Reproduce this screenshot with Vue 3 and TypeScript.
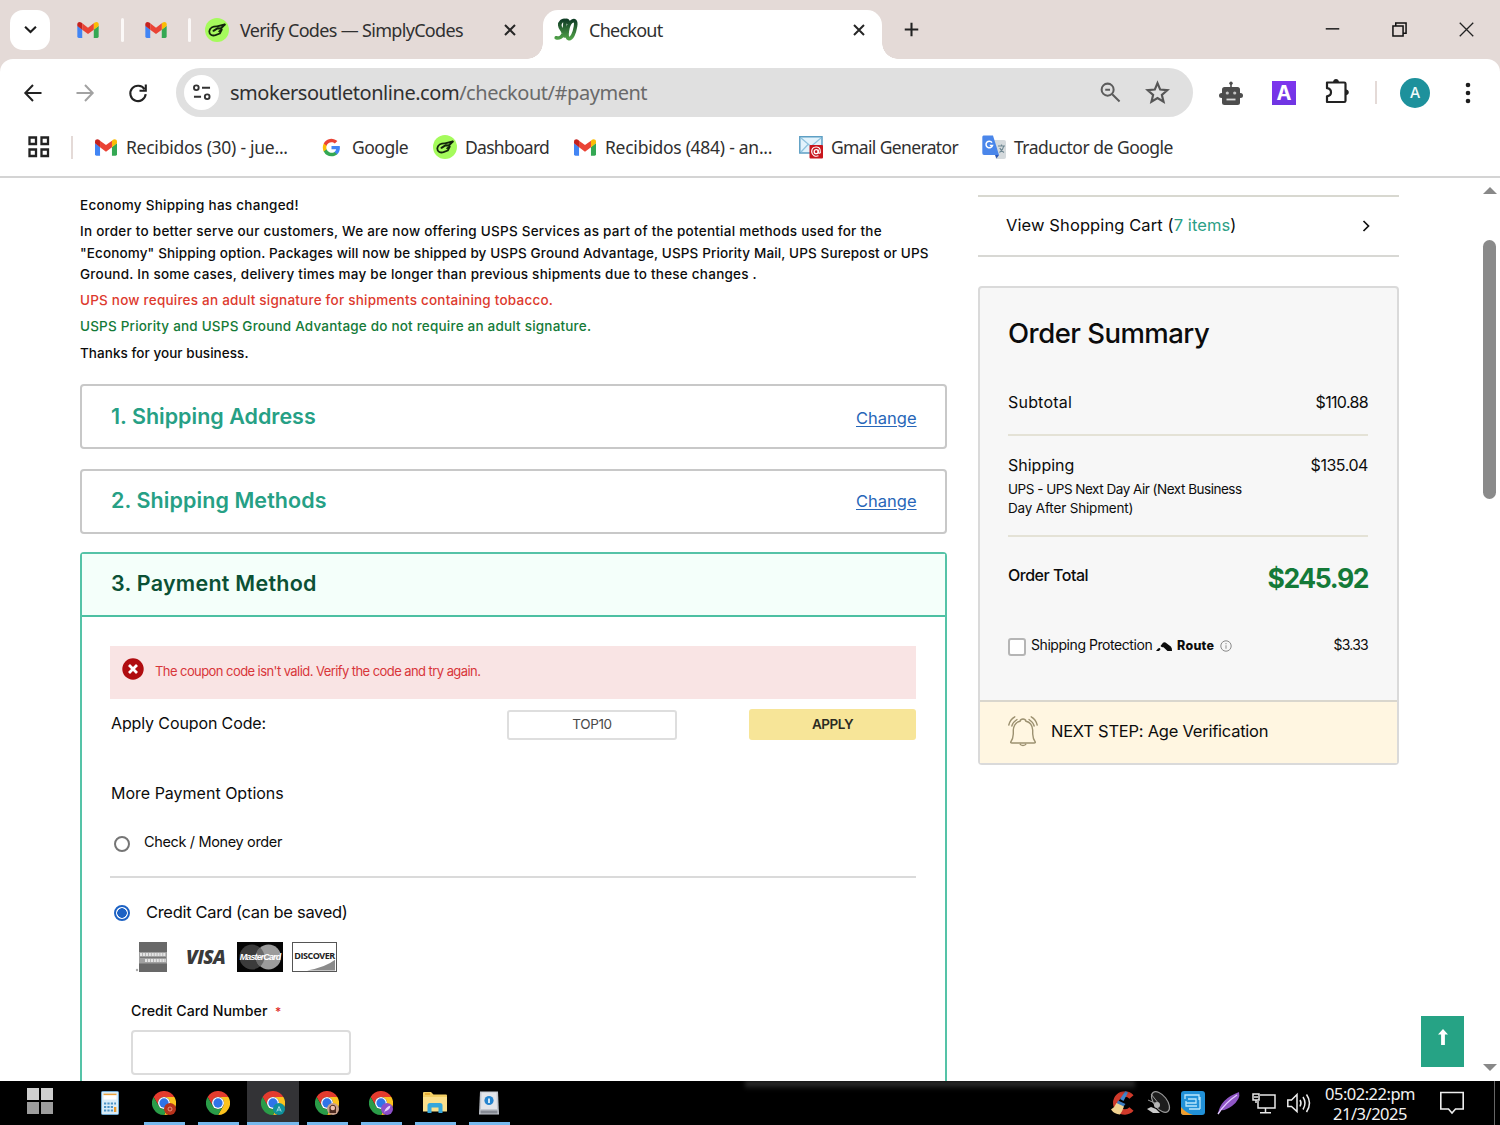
<script setup lang="ts">
interface Bookmark { icon: string; label: string; cls: string }
interface TaskApp { id: string; icon: string; badge?: string; mark?: string; active?: boolean; running: boolean }

const bookmarks: Bookmark[] = [
  { icon: 'gmail', label: 'Recibidos (30) - jue...', cls: 'bm-jue' },
  { icon: 'google', label: 'Google', cls: 'bm-google' },
  { icon: 'simply', label: 'Dashboard', cls: 'bm-dash' },
  { icon: 'gmail', label: 'Recibidos (484) - an...', cls: 'bm-an' },
  { icon: 'mailgen', label: 'Gmail Generator', cls: 'bm-gen' },
  { icon: 'translate', label: 'Traductor de Google', cls: 'bm-trad' },
]

const apps: TaskApp[] = [
  { id: 'calc', icon: 'calc', running: false },
  { id: 'c1', icon: 'chrome', badge: '#b8331c', mark: 'O', running: true },
  { id: 'c2', icon: 'chrome', running: true },
  { id: 'c3', icon: 'chrome', badge: '#0f919c', mark: 'A', active: true, running: true },
  { id: 'c4', icon: 'chrome', badge: '#c9a08c', mark: 'face', running: true },
  { id: 'c5', icon: 'chrome', badge: '#8c4fc9', mark: 'feather', running: true },
  { id: 'files', icon: 'folder', running: true },
  { id: 'dev', icon: 'device', running: true },
]
</script>

<template>
  <div class="screen">
    <svg class="defs" width="0" height="0" aria-hidden="true">
      <symbol id="gmail" viewBox="0 0 24 18">
        <path fill="#4285f4" d="M0 4.2V16.4Q0 18 1.6 18H5.5V8.5z" />
        <path fill="#34a853" d="M24 4.2V16.4Q24 18 22.4 18H18.5V8.5z" />
        <path fill="#c5221f" d="M0 4.4V2.6C0 .2 2.6-.7 4.4.6L5.5 1.5V8.6z" />
        <path fill="#fbbc04" d="M24 4.4V2.6C24 .2 21.4-.7 19.6.6L18.5 1.5V8.6z" />
        <path fill="#ea4335" d="M5.5 8.6V1.5L12 6.4 18.5 1.5V8.6L12 13.5z" />
      </symbol>
      <symbol id="google" viewBox="0 0 24 24">
        <path fill="#4285f4" d="M22.6 12.2c0-.8-.1-1.5-.2-2.2H12v4.3h5.9a5 5 0 0 1-2.2 3.3v2.8h3.6c2.1-2 3.3-4.8 3.3-8.2z" />
        <path fill="#34a853" d="M12 23c3 0 5.5-1 7.3-2.6l-3.6-2.8a6.6 6.6 0 0 1-9.9-3.5H2.2v2.8A11 11 0 0 0 12 23z" />
        <path fill="#fbbc05" d="M5.8 14.1a6.6 6.6 0 0 1 0-4.2V7.1H2.2a11 11 0 0 0 0 9.8z" />
        <path fill="#ea4335" d="M12 5.4c1.6 0 3.1.6 4.2 1.6l3.2-3.1A11 11 0 0 0 2.2 7.1l3.600 2.800A6.6 6.6 0 0 1 12 5.400z" />
      </symbol>
      <symbol id="simply" viewBox="0 0 24 24">
        <circle cx="12" cy="12" r="12" fill="#a5fb5c" />
        <g fill="none" stroke="#12250b" stroke-linecap="round" stroke-linejoin="round">
          <path d="M19.800 6.500L12 8.300C8 8.200 4.600 10 4.300 13.400C4.300 17 7.500 18 10.500 17.200L14.800 15.500L16.800 11.500" stroke-width="1.800" />
          <path d="M8.500 12.800L12.800 10.200L15.800 10.500L19.500 6.800" stroke-width="2" />
          <path d="M14 13.300L16 12" stroke-width="1.600" />
        </g>
      </symbol>
      <symbol id="mailgen" viewBox="0 0 24 24">
        <path d="M.8 1.800H23V18H.8z" fill="#e2f3fc" stroke="#5d9fc4" stroke-width="1.5" />
        <path d="M2 3L12 11.500 22 3M2 17L9 9.500" fill="none" stroke="#8fc3de" stroke-width="1.3" />
        <rect x="10.500" y="10" width="13.500" height="13.500" rx="1" fill="#c8161d" />
        <circle cx="17.200" cy="16.700" r="2" fill="none" stroke="#fff" stroke-width="1.3" />
        <path d="M19.200 14.500V17.500Q20 19 21.300 17.500C22 12.500 18.500 11.900 17 12C13.500 12.200 12.600 15 12.700 17C13 20.500 16.500 22 19.500 20.800" fill="none" stroke="#fff" stroke-width="1.2" />
      </symbol>
      <symbol id="translate" viewBox="0 0 24 24">
        <path d="M9 5H22Q24 5 24 7V22Q24 24 22 24H14z" fill="#d5dadd" />
        <path d="M1.500 .5H11L17 20H2Q.3 20 .3 18V2Q.3 .5 1.500 .5z" fill="#4a86ea" />
        <path d="M13 20H17L14.500 23.500z" fill="#2f58b4" />
        <path d="M10 7.600A3.300 3.300 0 1 0 10.500 10.500H7.800" fill="none" stroke="#fff" stroke-width="1.5" />
        <path d="M16 11H23M19.500 9.500V11M21.800 11Q21 15 17.500 17.500M17.800 13Q19 16 22 17.500" fill="none" stroke="#6f8792" stroke-width="1.2" />
      </symbol>
      <symbol id="chrome" viewBox="0 0 48 48">
        <path fill="#e33b2e" d="M3.200 12A24 24 0 0 1 44.800 12H24A12 12 0 0 0 13.600 30z" />
        <path fill="#fcc31e" d="M24 12H44.800A24 24 0 0 1 24 48L34.400 30A12 12 0 0 0 24 12z" />
        <path fill="#2a9c48" d="M24 48A24 24 0 0 1 3.200 12L13.600 30A12 12 0 0 0 34.400 30z" />
        <circle cx="24" cy="24" r="12" fill="#fff" />
        <circle cx="24" cy="24" r="9.300" fill="#2f74e8" />
      </symbol>
      <symbol id="calc" viewBox="0 0 24 24">
        <rect x="3.500" y=".5" width="17" height="23" rx="1" fill="#d9ecf8" stroke="#6fa9d2" stroke-width="1" />
        <rect x="5.500" y="3" width="13" height="5.500" fill="#fff" />
        <path d="M5.500 3.400H18.500" stroke="#e9a03b" stroke-width="1.5" />
        <path d="M6 12.500H18M6 16H15.500M6 19.500H15.500" stroke="#4c93c6" stroke-width="2" stroke-dasharray="2.2 1.2" />
        <rect x="16" y="16" width="2.300" height="5" fill="#e99a2c" />
      </symbol>
      <symbol id="folder" viewBox="0 0 24 24">
        <path d="M0 2Q0 1 1 1H8L10.500 3.500H23Q24 3.500 24 4.500V20H0z" fill="#f3cf63" />
        <path d="M0 6H24V20.500H0z" fill="#fbe08c" />
        <path d="M2 3H7" stroke="#e5a52b" stroke-width="1.5" />
        <path d="M4.500 22V14.500Q4.500 12 7 12H17Q19.500 12 19.500 14.500V22H15.500V16.500H8.500V22z" fill="#35a7dc" />
      </symbol>
      <symbol id="device" viewBox="0 0 24 24">
        <path d="M3 .5H21L22 23.500H2z" fill="#c3c7cf" />
        <path d="M4.500 1.500H19.500L20 18H4z" fill="#e3e5ea" />
        <path d="M3.500 19.500H20.500V22.500H3.500z" fill="#868a93" />
        <circle cx="12" cy="9.500" r="4.600" fill="#2584cf" />
        <path d="M12 7.500V12" stroke="#e6f5ff" stroke-width="1.8" />
      </symbol>
    </svg>

    <header class="tabs">
      <button class="tab-search"><svg viewBox="0 0 12 8" width="13" height="9"><path d="M1 1.500L6 6.300 11 1.500" fill="none" stroke="#1c1c1c" stroke-width="2" /></svg></button>
      <svg class="pin pin-a"><use href="#gmail" /></svg>
      <i class="tab-sep sep-a"></i>
      <svg class="pin pin-b"><use href="#gmail" /></svg>
      <i class="tab-sep sep-b"></i>
      <svg class="fav"><use href="#simply" /></svg>
      <span class="ui tab-title">Verify Codes — SimplyCodes</span>
      <svg class="x" viewBox="0 0 12 12"><path d="M1 1L11 11M11 1L1 11" /></svg>
      <div class="tab-active">
        <svg class="so" viewBox="0 0 24 24">
          <defs><linearGradient id="sog" x1="0" y1="0" x2="0" y2="1"><stop offset="0" stop-color="#123f27" /><stop offset="1" stop-color="#4fa047" /></linearGradient></defs>
          <path d="M11.500 2.500C8.500 1.500 5.500 4 5.800 7.500C6 11 9.500 12 9.200 15.500C8.800 19 5 20.500 2.200 19.800M11.500 2.500C10 8 10.500 13 11 18M14.500 20.500C11.500 19.500 13.500 7 17 4C20.500 1 22.500 3 21.500 8.500C20.500 14.500 18 21.500 14.500 20.500M14.500 5Q14 1.500 11.500 2.500" fill="none" stroke="url(#sog)" stroke-width="3.6" stroke-linecap="round" />
        </svg>
        <span class="ui active-title">Checkout</span>
        <svg class="x" viewBox="0 0 12 12"><path d="M1 1L11 11M11 1L1 11" /></svg>
      </div>
      <svg class="plus" viewBox="0 0 16 16"><path d="M8 .8V15.200M.8 8H15.200" stroke="#222" stroke-width="2.2" /></svg>
      <div class="win">
        <svg viewBox="0 0 16 16"><path d="M.8 7.300H15.200" stroke="#111" stroke-width="1.5" /></svg>
        <svg viewBox="0 0 16 16"><path d="M1 4.200H11.800V15H1zM4 4V1H15V12H12" fill="none" stroke="#111" stroke-width="1.6" /></svg>
        <svg viewBox="0 0 16 16"><path d="M.8.8L15.200 15.200M15.200.8L.8 15.200" stroke="#222" stroke-width="1.4" /></svg>
      </div>
    </header>

    <div class="toolbar-wrap">
      <div class="toolbar">
        <svg class="nav" viewBox="0 0 18 18"><path d="M17.500 9H1.800M9 1L1.300 9 9 17" fill="none" stroke="#222" stroke-width="2" /></svg>
        <svg class="nav fwd" viewBox="0 0 18 18"><path d="M.5 9H16.200M9 1L16.700 9 9 17" fill="none" stroke="#a2a2a2" stroke-width="2" /></svg>
        <svg class="nav" viewBox="0 0 18 18"><path d="M15.500 5.200A7.700 7.700 0 1 0 16.700 10.200M16.800.5V6.700H10.500" fill="none" stroke="#222" stroke-width="2.1" /></svg>
        <div class="omni">
          <span class="site"><svg viewBox="0 0 20 18"><g fill="none" stroke="#333" stroke-width="2"><circle cx="4" cy="4" r="2.500" /><path d="M10 4H18.500M1.500 13.500H9" /><circle cx="15.500" cy="13.500" r="2.500" /></g></svg></span>
          <span class="ui url">smokersoutletonline.com<em>/checkout/#payment</em></span>
          <svg class="oi" viewBox="0 0 22 22"><g fill="none" stroke="#5c5c5c" stroke-width="2.1"><circle cx="8" cy="8" r="6.300" /><path d="M12.800 12.800L20.500 20.500M5.500 8H10.500" /></g></svg>
          <svg class="oi star" viewBox="0 0 24 24"><path d="M12 3L14.600 9.200 21.400 9.800 16.200 14.300 17.800 20.900 12 17.400 6.200 20.900 7.800 14.300 2.600 9.800 9.400 9.200z" fill="none" stroke="#565656" stroke-width="2.1" /></svg>
        </div>
        <svg class="ext robot" viewBox="0 0 24 24">
          <g fill="#4d4d4d"><path d="M11.200 2.500H12.800V7H11.200z" /><circle cx="12" cy="2.200" r="1.700" /><rect x="3" y="6" width="18" height="18" rx="2.500" /><circle cx="2.500" cy="14.500" r="2.500" /><circle cx="21.500" cy="14.500" r="2.500" /></g>
          <circle cx="8.300" cy="12" r="1.600" fill="#c4c4c4" /><circle cx="15.700" cy="12" r="1.600" fill="#c4c4c4" /><path d="M7.500 18.500H16.500" stroke="#ddd" stroke-width="1.8" />
        </svg>
        <span class="ext-a">A</span>
        <svg class="ext puzzle" viewBox="0 0 26 26"><path d="M3 4.500H20.200Q21.500 4.500 21.500 5.800V22.700Q21.500 24 20.200 24H3V18.300Q7 17.800 7 14.300T3 10.200z" fill="none" stroke="#222" stroke-width="2.2" stroke-linejoin="round" /><path d="M9 4Q9.500 1 12 1T15 4zM21.500 11.300Q24.800 11.800 24.800 14.300T21.500 17.300z" fill="#222" /></svg>
        <i class="bar-sep"></i>
        <span class="avatar">A</span>
        <svg class="dots" viewBox="0 0 6 22"><g fill="#1e1e1e"><circle cx="3" cy="3" r="2.300" /><circle cx="3" cy="11" r="2.300" /><circle cx="3" cy="19" r="2.300" /></g></svg>
      </div>
    </div>

    <nav class="bookmarks">
      <svg class="grid-ic" viewBox="0 0 22 22"><path d="M1.500 1.500H8V8H1.500zM13.500 1.500H20V8H13.500zM1.500 13.500H8V20H1.500zM13.500 13.500H20V20H13.500z" fill="none" stroke="#222" stroke-width="2.3" /></svg>
      <i class="bar-sep bm-sep"></i>
      <div v-for="b in bookmarks" :key="b.label" class="bm" :class="b.cls">
        <svg><use :href="'#' + b.icon" /></svg>
        <span class="ui">{{ b.label }}</span>
      </div>
    </nav>

    <main class="page">
      <section class="main-col">
        <div class="notice">
          <p><span class="n1">Economy Shipping has changed!</span></p>
          <p>
            <span class="n2">In order to better serve our customers, We are now offering USPS Services as part of the potential methods used for the</span><br />
            <span class="n3">"Economy" Shipping option. Packages will now be shipped by USPS Ground Advantage, USPS Priority Mail, UPS Surepost or UPS</span><br />
            <span class="n4">Ground. In some cases, delivery times may be longer than previous shipments due to these changes .</span>
          </p>
          <p class="red"><span class="n5">UPS now requires an adult signature for shipments containing tobacco.</span></p>
          <p class="green"><span class="n6">USPS Priority and USPS Ground Advantage do not require an adult signature.</span></p>
          <p><span class="n7">Thanks for your business.</span></p>
        </div>

        <div class="step"><h2 class="h-a">1. Shipping Address</h2><a>Change</a></div>
        <div class="step second"><h2 class="h-b">2. Shipping Methods</h2><a>Change</a></div>

        <div class="pay">
          <div class="pay-head"><h2 class="h-c">3. Payment Method</h2></div>
          <div class="pay-body">
            <div class="alert">
              <svg viewBox="0 0 22 22"><circle cx="11" cy="11" r="10.700" fill="#b00d10" /><path d="M7 7L15 15M15 7L7 15" stroke="#fff" stroke-width="2.8" /></svg>
              <span>The coupon code isn't valid. Verify the code and try again.</span>
            </div>
            <div class="coupon">
              <span class="lbl-coupon">Apply Coupon Code:</span>
              <div class="coupon-in">TOP10</div>
              <button class="apply"><span>APPLY</span></button>
            </div>
            <div class="more">More Payment Options</div>
            <div class="opt"><i class="radio"></i><span class="opt-a">Check / Money order</span></div>
            <div class="opt cc"><i class="radio on"></i><span class="opt-b">Credit Card (can be saved)</span></div>
            <div class="logos">
              <svg class="amex" viewBox="0 0 32 30"><rect x="4" width="28" height="30" fill="#686868" /><rect x="4" y="10" width="28" height="11.500" fill="#a0a0a0" /><path d="M5 12.500H31M10 18.500H31" stroke="#e4e4e4" stroke-width="3" stroke-dasharray="2.2 .7" /><path d="M5 15.500H31" stroke="#777" stroke-width="1" /><circle cx="2" cy="28" r="1.200" fill="#aaa" /></svg>
              <span class="visa">VISA</span>
              <div class="mc"><svg viewBox="0 0 46 30"><circle cx="15" cy="15" r="12.500" fill="#3b3b3b" /><circle cx="31.500" cy="15" r="12.500" fill="#9c9c9c" /><path d="M23 5.500A12.500 12.500 0 0 1 23 24.500A12.500 12.500 0 0 1 23 5.500" fill="#696969" /></svg><b>MasterCard</b></div>
              <div class="disc"><svg viewBox="0 0 44 30"><path d="M44 18Q34 26 14 29.500H44z" fill="#8b8b8b" /></svg><b>DISCOVER</b></div>
            </div>
            <div class="cc-label"><span class="ccn">Credit Card Number</span><i>*</i></div>
            <div class="cc-input"></div>
          </div>
        </div>
      </section>

      <aside class="side">
        <div class="cart"><span class="cart-t">View Shopping Cart (<b>7 items</b>)</span><svg viewBox="0 0 8 12"><path d="M1.500 1L6.500 6 1.500 11" fill="none" stroke="#111" stroke-width="1.7" /></svg></div>
        <div class="summary">
          <div class="sum-body">
            <h1><span>Order Summary</span></h1>
            <div class="row sub"><span class="s-sub">Subtotal</span><span class="v-sub">$110.88</span></div>
            <div class="row ship"><span class="s-ship">Shipping</span><span class="v-ship">$135.04</span></div>
            <div class="detail"><span class="d1">UPS - UPS Next Day Air (Next Business</span><br /><span class="d2">Day After Shipment)</span></div>
            <div class="row total"><span class="s-tot">Order Total</span><strong>$245.92</strong></div>
            <div class="route">
              <i class="check"></i><span class="r-lbl">Shipping Protection</span>
              <svg class="r-ic" viewBox="0 0 16 9"><path d="M4.500 4L7 .8Q8.200-.3 9.500.6L14.800 4.500Q16.300 6 16 9H11.500L7.500 5.200Q6 5.800 4.500 4zM0 9L1.800 6.800Q3.800 5.200 4.500 7.200L3 9z" fill="#0c0c0c" /></svg>
              <span class="r-name">Route</span>
              <svg class="r-info" viewBox="0 0 12 12"><circle cx="6" cy="6" r="5.200" fill="none" stroke="#8b8b8b" /><path d="M6 5.200V8.700M6 3V4.200" stroke="#999" stroke-width="1.1" /></svg>
              <span class="r-val">$3.33</span>
            </div>
          </div>
          <div class="next">
            <svg viewBox="0 0 30 30"><g fill="none" stroke="#9c9170" stroke-width="1.4" stroke-linecap="round"><path d="M3 25.500Q5 23 5.300 18V14Q6 6.500 12 5.300Q12.500 3 15 3T18 5.300Q24 6.500 24.700 14V18Q25 23 27 25.500Q28 27 26 27H4Q2 27 3 25.500zM12.300 28.500Q15 30.500 17.700 28.500M.8 9Q2 3.500 6.800.8M3.800 10Q5 6 9 3.500M29.200 9Q28 3.500 23.200.8M26.200 10Q25 6 21 3.500" /></g></svg>
            <span>NEXT STEP: Age Verification</span>
          </div>
        </div>
      </aside>

      <div class="scroll"><i class="up"></i><i class="thumb"></i><i class="down"></i></div>
      <button class="totop"><svg viewBox="0 0 10 16"><path d="M5 0L10 5.500H6.900V16H3.100V5.500H0z" fill="#fff" /></svg></button>
    </main>

    <footer class="taskbar">
      <i class="glow"></i>
      <svg class="start" viewBox="0 0 26 26"><path d="M0 0H12V12H0zM14 0H26V12H14z" fill="#cfcfcf" /><path d="M0 14H12V26H0zM14 14H26V26H14z" fill="#9d9d9d" /></svg>
      <div class="apps">
        <div v-for="a in apps" :key="a.id" class="app" :class="{ active: a.active, run: a.running }">
          <svg class="app-ic"><use :href="'#' + a.icon" /></svg>
          <svg v-if="a.badge" class="badge" viewBox="0 0 12 12">
            <circle cx="6" cy="6" r="6" :fill="a.badge" />
            <path v-if="a.mark === 'feather'" d="M3 10Q4 4 9.500 2.500Q9 7 4 8.500" fill="#e6d2ff" />
            <g v-else-if="a.mark === 'face'"><path d="M2.500 10V4Q6-.5 9 4V10" fill="#4b2a20" /><circle cx="5.800" cy="5" r="2.300" fill="#efc3ae" /></g>
            <circle v-else-if="a.mark === 'O'" cx="6" cy="6" r="2" fill="none" stroke="#e5927f" stroke-width="1" />
            <path v-else d="M3.800 8.500L6 3.500 8.200 8.500M4.800 7H7.200" fill="none" stroke="#a6dbe0" stroke-width="1" />
          </svg>
        </div>
      </div>
      <div class="tray">
        <svg viewBox="0 0 24 24"><path d="M20.500 6A9 9 0 1 0 20.500 18" fill="none" stroke="#cf3a2b" stroke-width="5.5" /><path d="M14.500 0L17 1.500 12.500 10 9 8z" fill="#3d86cf" /><path d="M7 9.500L14.500 13 12 16 5.500 13z" fill="#3b7cc0" /><path d="M5.500 12L13 15.500Q11 21 9 23.500Q3 23 0 18.500Q4 16 5.500 12z" fill="#f1d28f" /></svg>
        <svg viewBox="0 0 24 24"><ellipse cx="14.500" cy="11" rx="6.500" ry="12" transform="rotate(-38 14.500 11)" fill="#1d1d1d" stroke="#9a9a9a" stroke-width="1.2" /><path d="M2 9L12 13.500M5 3L13 13" stroke="#999" stroke-width="1" /><circle cx="11" cy="14" r="3" fill="#b5b5b5" /><path d="M1 18L5 16 10 18 14 22H7z" fill="#c9c9c9" /></svg>
        <svg viewBox="0 0 24 24"><rect width="24" height="24" rx="3" fill="#2191d8" /><path d="M0 16Q5 22 12 24H3Q0 24 0 21z" fill="#ef9d2e" /><path d="M4 8V4H18V9M7 8H15V12H5V15H16M19 6V18M8 18H19M5 10V13" fill="none" stroke="#b9e6fb" stroke-width="1.3" /></svg>
        <svg viewBox="0 0 24 24"><path d="M1 23Q3 8 22 1Q24 8 15 15Q8 20 4 19z" fill="#8f56c5" /><path d="M1 23Q8 12 20 4" fill="none" stroke="#e3cbff" stroke-width="1.4" /></svg>
        <svg viewBox="0 0 24 24"><path d="M8 4H23V17H6V10M13.500 17V21.500M8 21.800H19M1 3H7V9H1zM4 9V12M3 5V7M5 5V7" fill="none" stroke="#e8e8e8" stroke-width="1.5" /></svg>
        <svg viewBox="0 0 24 24"><path d="M.8 9H4.500L10 3.500V20.500L4.500 15.500H.8zM13 9Q15 12 13 15.500M16 6Q20 12 16 18.500M19.500 3.500Q25.500 12 19.500 21" fill="none" stroke="#eee" stroke-width="1.5" /></svg>
      </div>
      <div class="clock ui"><span class="time">05:02:22:pm</span><span class="date">21/3/2025</span></div>
      <svg class="notif" viewBox="0 0 24 24"><path d="M.8 1.500H23.200V18H15.500L12 22 8.500 18H.8z" fill="none" stroke="#eee" stroke-width="1.6" /></svg>
      <i class="peek"></i>
    </footer>
  </div>
</template>

<style>
body { overflow: hidden; }
</style>

<style scoped>
* { box-sizing: border-box; }
.screen { width: 1500px; height: 1125px; display: flex; flex-direction: column; overflow: hidden; background: #fff; position: relative; font-family: Inter, "Liberation Sans", sans-serif; color: #0c0c0c; }
.defs { position: absolute; }
svg { display: block; flex: none; overflow: visible; }
button { border: 0; padding: 0; font-family: inherit; }
h1, h2, p { margin: 0; }
span { white-space: nowrap; }
.ui { font-family: "Noto Sans", "Open Sans", sans-serif; color: #303030; }

.tabs { height: 59px; background: #e4dad7; display: flex; flex: none; align-items: center; }
.tab-search { width: 40px; height: 40px; margin-left: 10px; border-radius: 13px; background: #fff; display: grid; place-items: center; }
.pin { width: 22px; height: 16px; }
.pin-a { margin-left: 27px; }
.pin-b { margin-left: 21px; }
.tab-sep { width: 3px; height: 24px; background: #fbf8f7; border-radius: 2px; }
.sep-a { margin-left: 22px; }
.sep-b { margin-left: 21px; }
.fav { width: 24px; height: 24px; margin-left: 14px; }
.tab-title { width: 264px; margin-left: 11px; font-size: 18px; letter-spacing: -0.68px; }
.x { width: 12px; height: 12px; fill: none; stroke: #262626; stroke-width: 2; }
.tab-active { position: relative; align-self: flex-end; width: 339px; height: 49px; margin-left: 27px; background: #fff; border-radius: 15px 15px 0 0; display: flex; align-items: center; padding: 0 0 9px 11px; }
.tab-active::before, .tab-active::after { content: ""; position: absolute; bottom: 0; width: 16px; height: 16px; }
.tab-active::before { left: -16px; background: radial-gradient(circle at 0 0, transparent 15.5px, #fff 16px); }
.tab-active::after { right: -16px; background: radial-gradient(circle at 100% 0, transparent 15.5px, #fff 16px); }
.so { width: 24px; height: 24px; }
.active-title { width: 264px; margin-left: 11px; font-size: 18px; letter-spacing: -0.75px; }
.plus { width: 15px; height: 15px; margin-left: 22px; }
.win { display: flex; gap: 52px; margin-left: auto; margin-right: 26px; }
.win svg { width: 15px; height: 15px; }

.toolbar-wrap { background: #e4dad7; flex: none; }
.toolbar { height: 67px; background: #fff; border-radius: 13px 13px 0 0; display: flex; align-items: center; padding-left: 24px; }
.nav { width: 18px; height: 18px; margin-right: 34px; }
.nav.fwd { margin-right: 35px; }
.omni { width: 1017px; height: 49px; border-radius: 25px; background: #e0e0e0; display: flex; align-items: center; padding-left: 8px; margin-left: -5px; }
.site { width: 35px; height: 35px; border-radius: 50%; background: #fff; display: grid; place-items: center; }
.site svg { width: 20px; height: 17px; }
.url { width: 870px; margin-left: 11px; font-size: 20px; letter-spacing: -0.46px; }
.url em { font-style: normal; color: #6a6a6a; }
.oi { width: 21px; height: 21px; }
.star { width: 25px; height: 25px; margin-left: 24px; }
.ext { width: 24px; height: 24px; }
.robot { margin-left: 26px; }
.ext-a { width: 24px; height: 24px; margin-left: 29px; background: linear-gradient(180deg, #7e35ee, #6f35e2); color: #fff; font-weight: 700; font-size: 20px; line-height: 24px; text-align: center; }
.puzzle { width: 26px; height: 26px; margin-left: 28px; margin-top: -3px; }
.bar-sep { width: 2px; height: 23px; background: #e4dad7; }
.toolbar .bar-sep { margin-left: 25px; }
.avatar { width: 30px; height: 30px; margin-left: 23px; border-radius: 50%; background: #1d919c; color: #eefafa; font-size: 15px; line-height: 30px; text-align: center; font-weight: 500; }
.dots { width: 6px; height: 22px; margin-left: 35px; }

.bookmarks { height: 52px; flex: none; border-bottom: 2px solid #d4d4d4; display: flex; align-items: center; padding: 0 0 8px 28px; }
.grid-ic { width: 22px; height: 22px; }
.bm-sep { margin-left: 21px; }
.bm { display: flex; align-items: center; }
.bm span { font-size: 17.5px; }
.bm svg { width: 22px; height: 17px; }
.bm-jue { margin-left: 22px; width: 227px; }
.bm-jue span { margin-left: 9px; letter-spacing: -0.26px; }
.bm-google { width: 111px; }
.bm-google svg { width: 19px; height: 19px; }
.bm-google span { margin-left: 11px; letter-spacing: -0.5px; }
.bm-dash { width: 141px; }
.bm-dash svg { width: 24px; height: 24px; }
.bm-dash span { margin-left: 8px; letter-spacing: -0.72px; }
.bm-an { width: 225px; }
.bm-an span { margin-left: 9px; letter-spacing: -0.26px; }
.bm-gen { width: 183px; }
.bm-gen svg, .bm-trad svg { width: 24px; height: 24px; }
.bm-gen span, .bm-trad span { margin-left: 8px; }
.bm-gen span { letter-spacing: -0.64px; }
.bm-trad span { letter-spacing: -0.5px; }

.page { height: 903px; flex: none; display: flex; position: relative; overflow: hidden; }
.main-col { width: 867px; margin-left: 80px; }
.notice { padding: 17px 0 0; font-size: 13.5px; line-height: 21.3px; font-weight: 500; height: 206px; }
.notice p { margin-bottom: 5px; }
.n1 { letter-spacing: 0.27px; }
.n2 { letter-spacing: 0.25px; }
.n3 { letter-spacing: 0.13px; }
.n4 { letter-spacing: 0.24px; }
.n5 { letter-spacing: 0.22px; }
.n6 { letter-spacing: 0.2px; }
.n7 { letter-spacing: 0.05px; }
.red { color: #dd3a2e; }
.green { color: #147a38; }
.step { height: 65px; border: 2px solid #c8c8c8; border-radius: 4px; display: flex; justify-content: space-between; align-items: center; padding: 0 28px 2px 29px; }
.step.second { margin-top: 20px; padding-bottom: 4px; }
h2 { font-size: 21.5px; font-weight: 600; color: #26a085; line-height: 30px; white-space: nowrap; }
.h-b { letter-spacing: 0.08px; }
.h-c { letter-spacing: 0.25px; }
.step a { font-size: 16.5px; color: #2766b8; text-decoration: underline; text-underline-offset: 2px; padding-top: 4px; width: 61px; white-space: nowrap; }
.step.second a { padding-top: 2px; }
.pay { margin-top: 18px; border: 2px solid #55c3a7; border-radius: 4px 4px 0 0; height: 560px; }
.pay-head { height: 63px; border-bottom: 2px solid #4cc0a2; background: #f4fffa; padding: 14px 0 0 29px; }
.pay-head h2 { color: #0b5135; }
.pay-body { padding: 29px 29px 0 28px; }
.alert { height: 53px; background: #f9e4e4; display: flex; padding: 12px 0 0 12px; color: #d8363a; font-size: 13px; }
.alert svg { width: 22px; height: 22px; }
.alert span { margin-left: 11px; line-height: 26px; letter-spacing: -0.57px; }
.coupon { display: flex; height: 31px; margin-top: 10px; font-size: 16px; }
.lbl-coupon { width: 397px; padding-left: 1px; line-height: 28px; letter-spacing: -0.12px; }
.coupon-in { width: 170px; height: 30px; margin-top: 1px; border: 2px solid #dedede; border-radius: 3px; text-align: center; font-size: 13.5px; line-height: 24px; color: #4a4a4a; letter-spacing: -0.4px; }
.apply { width: 167px; height: 31px; margin-left: 72px; background: #f7e598; border-radius: 3px; font-size: 13.5px; font-weight: 600; color: #2b2b22; padding-bottom: 2px; letter-spacing: -0.5px; }
.more { margin-top: 41px; padding-left: 1px; font-size: 16px; line-height: 24px; white-space: nowrap; }
.opt { display: flex; align-items: center; height: 73px; border-bottom: 2px solid #dadada; padding: 2px 0 0 4px; }
.radio { width: 16px; height: 16px; border-radius: 50%; border: 2px solid #757575; margin-top: 4px; }
.opt-a { font-size: 14.5px; margin-left: 14px; letter-spacing: -0.35px; }
.opt.cc { border: 0; height: 64px; padding-top: 4px; }
.radio.on { border-color: #1d62c4; background: radial-gradient(circle, #1d62c4 4.5px, #fff 5px); margin-top: 1px; }
.opt-b { font-size: 16.5px; margin-left: 16px; letter-spacing: -0.31px; }
.logos { display: flex; height: 30px; padding-left: 25px; }
.amex { width: 32px; height: 30px; }
.visa { width: 53px; padding-left: 19px; font: italic 800 19px/31px "Open Sans", sans-serif; color: #3a3a3a; letter-spacing: -0.6px; }
.mc, .disc { position: relative; height: 30px; display: grid; place-items: center; overflow: hidden; }
.mc { width: 46px; margin-left: 17px; background: #050505; }
.disc { width: 45px; margin-left: 9px; border: 1px solid #555; background: #fff; }
.mc svg, .disc svg { position: absolute; inset: 0; width: 100%; height: 100%; }
.mc b { position: relative; color: #fff; font: italic 700 9px "Liberation Sans", sans-serif; letter-spacing: -0.9px; }
.disc b { position: relative; color: #222; font: 700 9px "Open Sans", sans-serif; letter-spacing: -0.5px; top: -2px; }
.cc-label { display: flex; margin-top: 28px; padding-left: 21px; font-size: 14.2px; font-weight: 500; line-height: 21px; }
.ccn { width: 144px; letter-spacing: 0.05px; }
.cc-label i { color: #e02b27; font-style: normal; font-size: 12px; line-height: 23px; }
.cc-input { width: 220px; height: 45px; margin: 7px 0 0 21px; border: 2px solid #dcdcdc; border-radius: 4px; }

.side { width: 422px; margin-left: 30px; padding-top: 17px; }
.cart { height: 62px; border-top: 2px solid #d8d8d0; border-bottom: 2px solid #d8d8d4; display: flex; align-items: center; justify-content: space-between; padding: 0 29px 3px 28px; font-size: 16.5px; margin: 0 0 0 1px; }
.cart-t { letter-spacing: 0.1px; }
.cart b { font-weight: 400; color: #2ba086; }
.cart svg { width: 8px; height: 12px; margin-top: 3px; }
.summary { margin: 29px 0 0 1px; height: 479px; border: 2px solid #dadada; border-radius: 4px; background: #f7f7f7; display: flex; flex-direction: column; }
.sum-body { padding: 0 29px 0 28px; height: 412px; flex: none; }
h1 { font-size: 27.5px; font-weight: 500; line-height: 36px; padding-top: 27px; height: 95px; letter-spacing: -0.52px; }
.row { display: flex; justify-content: space-between; font-size: 16px; line-height: 24px; }
.row.sub { height: 53px; padding-top: 7px; border-bottom: 2px solid #e4e2d6; }
.s-sub { letter-spacing: 0.2px; }
.v-sub { letter-spacing: -0.65px; }
.v-ship { letter-spacing: -0.45px; }
.row.ship { padding-top: 17px; height: 42px; }
.detail { font-size: 13.5px; line-height: 19.4px; padding-top: 2px; height: 59px; border-bottom: 2px solid #e4e2d6; }
.d1 { letter-spacing: -0.49px; }
.d2 { letter-spacing: -0.17px; }
.row.total { padding-top: 26px; height: 89px; font-weight: 500; }
.s-tot { letter-spacing: -0.48px; }
.row strong { font-size: 26.5px; line-height: 31px; color: #147a38; font-weight: 700; letter-spacing: -1.4px; }
.route { display: flex; align-items: flex-start; font-size: 14px; line-height: 20px; }
.check { width: 18px; height: 18px; margin-top: 12px; border: 2px solid #b5b5b5; border-radius: 3px; background: #fff; }
.r-lbl, .r-val { margin-top: 9px; }
.r-lbl { width: 121px; margin-left: 5px; letter-spacing: -0.44px; }
.r-ic { width: 16px; height: 9px; margin: 16px 0 0 4px; }
.r-name { width: 44px; margin: 11px 0 0 5px; font-size: 12.5px; font-weight: 800; line-height: 18px; letter-spacing: 0.25px; }
.r-info { width: 12px; height: 12px; margin: 14px 0 0 -1px; }
.r-val { margin-left: auto; letter-spacing: -0.75px; }
.next { flex: 1; border-top: 2px solid #d9d6cd; background: #fff6e1; display: flex; align-items: center; padding: 0 0 3px 28px; font-size: 16.5px; }
.next svg { width: 30px; height: 30px; }
.next span { margin-left: 13px; letter-spacing: -0.24px; }

.scroll { width: 17px; margin-left: auto; display: flex; flex-direction: column; align-items: center; padding-right: 4px; }
.up, .down { border: 7px solid transparent; width: 0; height: 0; }
.up { border-bottom-color: #888; border-top: 0; margin-top: 9px; }
.thumb { width: 13px; height: 259px; border-radius: 7px; background: #8a8a8a; margin-top: 46px; }
.down { border-top-color: #888; border-bottom: 0; margin-top: 565px; }
.totop { position: absolute; left: 1421px; top: 838px; width: 43px; height: 51px; background: #26a385; display: flex; justify-content: center; padding-top: 13px; }
.totop svg { width: 10px; height: 16px; }

.taskbar { height: 44px; flex: none; background: #000; display: flex; position: relative; align-items: center; }
.glow { position: absolute; left: 745px; top: 0; width: 390px; height: 9px; background: linear-gradient(180deg, #3c3c3c, #000); filter: blur(2px); clip-path: inset(0 -10px -10px -10px); }
.start { width: 26px; height: 26px; margin: -4px 0 0 27px; }
.apps { display: flex; gap: 2.2px; height: 44px; margin-left: 31px; }
.app { position: relative; width: 52px; display: grid; place-items: center; }
.app-ic { width: 24px; height: 24px; }
.app.run::after { content: ""; position: absolute; left: 6px; right: 5px; bottom: 0; height: 3px; background: #76b9ed; }
.app.active { background: #333336; }
.app.active::after { left: 0; right: 0; }
.badge { position: absolute; left: 26px; top: 22px; width: 12px; height: 12px; }
.tray { display: flex; gap: 11.2px; margin-left: auto; }
.tray svg { width: 24px; height: 24px; }
.clock { width: 96px; margin-left: 11px; padding-top: 1px; display: flex; flex-direction: column; align-items: center; font-size: 16.5px; line-height: 20px; color: #f2f2f2; }
.clock span { letter-spacing: -0.5px; }
.notif { width: 24px; height: 24px; margin-left: 22px; }
.peek { width: 1px; height: 44px; margin: 0 5px 0 30px; background: #666; }
</style>
